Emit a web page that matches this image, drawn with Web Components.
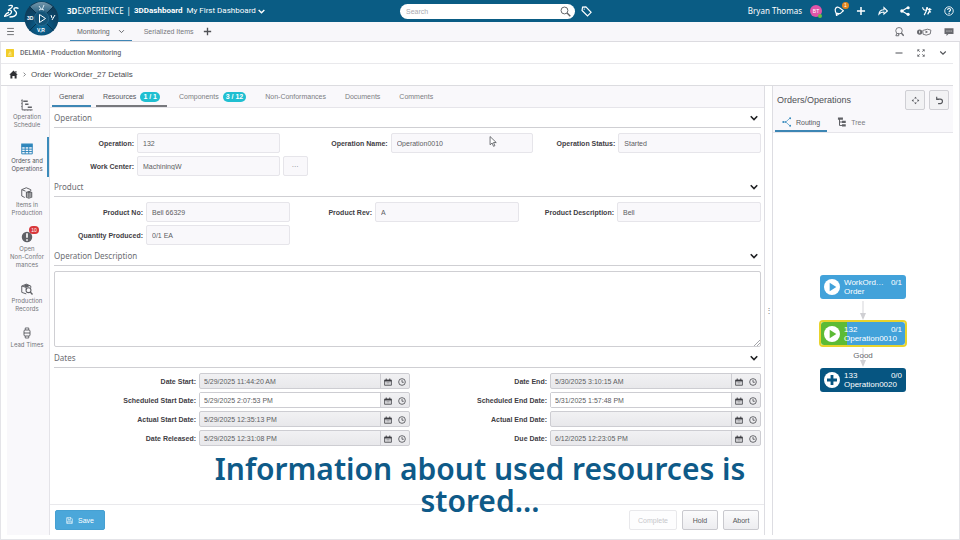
<!DOCTYPE html>
<html lang="en">
<head>
<meta charset="utf-8">
<title>DELMIA - Production Monitoring</title>
<style>
  html, body {
    margin: 0;
    height: 100%;
  }

  body {
    font: 7px/9px "Liberation Sans", Arial, sans-serif;
    color: #4f5156;
    background: #ffffff;
    overflow: hidden;
    --brand: #0a5c84;
    --blue: #42a2da;
    --line: #dddde2;
    --soft: #f9f8fb;
    --brand-font: "Noto Sans", "Open Sans", sans-serif;
  }
</style>
</head>
<body>
<app-shell></app-shell>

<script>
// Every icon is drawn on a 16x16 grid, stroked with the current colour
const ICONS = {
  menu: '<path d="M2 2.500h12M2 8h12M2 13.500h12"/>',
  plus: '<path d="M8 1.500v13M1.500 8h13" stroke-width="2.400"/>',
  chevron: '<path d="M2.500 5l5.500 5.500L13.500 5" stroke-width="2.200"/>',
  chevronBold: '<path d="M1.500 4.500L8 11l6.500-6.500" stroke-width="3.200"/>',
  right: '<path d="M5 2L11 8 5 14" stroke-width="2.200"/>',
  search: '<circle cx="6.500" cy="6.500" r="5"/><path d="M10.300 10.300L15 15" stroke-width="2"/>',
  tag: '<path d="M1.500 6.500l.8-4.800 4.800-.4 7.600 7.900-5.200 5.300z" stroke-width="1.700"/><circle cx="4.700" cy="4.500" r="1" fill="currentColor" stroke="none"/>',
  bell: '<path d="M3.500 11.500C1 7 1.500 3 5 1.800c2.500-.7 4 1 6 2.700 2 1.500 3.500 2 4 3-1.500 1-2.500 2.500-4.500 4-2 1.300-4.500.8-7 0zM3.500 12l.5 3 3.500-2" stroke-width="1.900"/>',
  share: '<path d="M1.500 13c.5-5 3.500-7 8-7V2.500L15 8l-5.500 5v-3.500C6 9.500 4 10 1.500 13z" stroke-width="1.700"/>',
  network: '<path d="M3 8l9.500-5.500M3 8l9.500 5.500" stroke-width="2"/><circle cx="3" cy="8" r="2.700" fill="currentColor" stroke="none"/><circle cx="13" cy="2.700" r="2.500" fill="currentColor" stroke="none"/><circle cx="13" cy="13.300" r="2.500" fill="currentColor" stroke="none"/>',
  tools: '<path d="M1 2c.5 3.500 2 5 5 4.500M8 1.500c0 4.500-2 9-4.500 13M9 13.500c2.500-3 3.500-7 3.500-10.500M8.500 2.500c.5 4 4 4.500 6.500 2.500M10.500 9.500h4" stroke-width="2"/>',
  help: '<circle cx="8" cy="8" r="6.800"/><path d="M5.700 6.200c.2-3.200 5-2.900 4.800 0C10.400 8 8.100 8 8.100 9.800M8.100 11.300v1.500" stroke-width="1.800"/>',
  searchUser: '<circle cx="8" cy="6" r="5.200"/><path d="M11.700 9.700l3.800 4.300" stroke-width="2.200"/><path d="M4.500 10L3 14h4.500v-4.500" stroke-width="1.500"/>',
  play3d: '<circle cx="4.500" cy="8" r="4.200" fill="currentColor" stroke="none"/><path d="M4.500 6v4" stroke="#fff" stroke-width="1.300"/><path d="M9.500 5.500L17 3.500l5.500 1.500-1 6-6.500 2-5-1.500z"/><path d="M14 5.500l4 2.500-4 2z" fill="currentColor" stroke="none"/>',
  chat: '<path d="M.8 2h14.400v9H7l-3 3.500V11H.8z" fill="currentColor" stroke="none"/><path d="M4 6.500h1.500M7.300 6.500h1.500M10.600 6.500h1.500" stroke="#fff"/>',
  minus: '<path d="M1 8h14" stroke-width="2"/>',
  expand: '<path d="M1.500 5V1.500H5M1.500 1.500l4 4M11 1.500h3.500V5M14.500 1.500l-4 4M1.500 11v3.500H5M1.500 14.500l4-4M11 14.500h3.500V11M14.500 14.500l-4-4" stroke-width="1.500"/>',
  home: '<path d="M8 .8l7.500 7.500h-2V15H10v-4.500H6V15H2.500V8.300h-2z" fill="currentColor" stroke="none"/><path d="M12.300 1.800v3" stroke-width="1.800"/>',
  app: '<rect width="16" height="16" rx="1" fill="#f2cd2a" stroke="none"/><path d="M4 12h7.500M8 4.500v4M5 9.500l6-1.500" stroke="#fff3b8" stroke-width="1.500"/>',
  schedule: '<path d="M1.500 .5v14h14" stroke-width="1.300"/><path d="M3 3h6M5.500 7h4.500M9 11h5.500" stroke-width="2.200"/><path d="M1.500 2H.3M1.500 6H.3M1.500 10H.3M5 14.500v1.200M9 14.500v1.200M13 14.500v1.200" stroke-width="1"/>',
  table: '<path d="M1 1.500h14v3H1z" fill="currentColor"/><path d="M1 5h14v9.500H1zM5.600 5v9.500M10.300 5v9.500M1 8.200h14M1 11.400h14" stroke-width="1.300"/>',
  items: '<path d="M1 3.500l6-2.500 6 2.500v2M1 3.500v8.500l4 2M1 3.500l5 2" stroke-width="1.300"/><path d="M6.500 6.500l4.500-1.500 4 2V14l-4.500 1.500L6.500 14z" fill="currentColor" stroke="none"/><path d="M8.500 7.500v6.500M10.800 8v7M13 7.500V14" stroke="#fff" stroke-width=".7"/>',
  alert: '<circle cx="8" cy="8" r="7" fill="currentColor" stroke="none"/><path d="M8 3v6M8 11v2" stroke="#fff" stroke-width="2.200"/>',
  records: '<path d="M1 4l6-2.500L13 4v2.500M1 4v8.500l6 2M1 4l6 2v3" stroke-width="1.300"/><path d="M7 1.500l5.500 2.200L7.500 6 3 4z" fill="currentColor" stroke="none"/><circle cx="10" cy="9.500" r="3.300"/><path d="M12.300 12l3 3.300" stroke-width="1.800"/>',
  lead: '<path d="M5.700 4V1.300h4.600V4M5.700 12v2.700h4.600V12" stroke-width="1.200"/><rect x="4" y="4" width="8" height="8" rx="1.500" stroke-width="1.300"/><path d="M4 8h8" stroke-width="1.300"/>',
  routing: '<path d="M3 8h3l6-5.500M6 8l6 5.500" stroke-width="1"/><circle cx="2" cy="8" r="1.500" fill="currentColor" stroke="none"/><circle cx="5.500" cy="8" r="1.300" fill="currentColor" stroke="none"/><circle cx="13" cy="2" r="1.500" fill="currentColor" stroke="none"/><circle cx="13" cy="14" r="1.500" fill="currentColor" stroke="none"/>',
  tree: '<path d="M4 2.500v11h4M4 8h4" stroke-width="1.600"/><path d="M8 7.800h6M8 13.300h6M1.500 2.500h8" stroke-width="3.400"/>',
  center: '<path d="M5.500 4.500L8 1.200l2.500 3.300zM5.500 11.500L8 14.800l2.500-3.300zM4.500 5.500L1.200 8l3.300 2.500zM11.500 5.500L14.800 8l-3.300 2.500z" fill="currentColor" stroke="none"/>',
  undo: '<path d="M3 5.500h6.500c5 0 5 8 0 8H5.500M3 1.500v4.500h4" stroke-width="2"/>',
  calendar: '<path d="M1.200 4.500h13.600V14.500H1.200z" stroke-width="1.600"/><path d="M1 3.500h14v3.500H1z" fill="currentColor" stroke="none"/><path d="M4.500 1v4M11.500 1v4" stroke-width="1.800"/><path d="M3.500 9h9.500M3.500 11.800h9.500" stroke-width="1" stroke-dasharray="1.500 1"/>',
  clock: '<circle cx="8" cy="8" r="6.700" stroke-width="1.500"/><path d="M8 4v4.500h3.500" stroke-width="1.500"/>',
  save: '<path d="M1.500 1.500h10l3 3v10h-13zM4.500 1.500v4h6v-4M4 14.500V9h8v5.500M6 11.500h4" stroke-width="1.400"/>',
  start: '<circle cx="8" cy="8" r="8" fill="#fff" stroke="none"/><path d="M5.700 3.700L12.300 8l-6.600 4.300z" fill="currentColor" stroke="none"/>',
  add: '<circle cx="8" cy="8" r="8" fill="#fff" stroke="none"/><path d="M8 3v10M3 8h10" stroke-width="2.800"/>',
  pointer: '<path d="M3 .8v12l3-2.600 2 4.800 2-.9-2-4.600h4z" fill="#fff" stroke-width="1.200"/>'
};

const define = (name, html, setup) => {
  const template = document.createElement('template');
  template.innerHTML = html;

  customElements.define(name, class extends HTMLElement {
    constructor() {
      super();
      this.attachShadow({ mode: 'open' });
      this.shadowRoot.appendChild(template.content.cloneNode(true));
    }

    connectedCallback() {
      if (setup) setup(this, selector => this.shadowRoot.querySelector(selector));
    }
  });
};

define('ui-icon', `
  <style>
    :host { display: inline-block; flex: none; width: 10px; height: 10px; }
    svg { display: block; width: 100%; height: 100%; fill: none; stroke: currentColor; stroke-width: 1.400; }
  </style>
  <svg viewBox="0 0 16 16" aria-hidden="true"></svg>
`, (host, $) => {
  const name = host.getAttribute('name');
  $('svg').innerHTML = ICONS[name];
  if (name === 'play3d') $('svg').setAttribute('viewBox', '0 0 23 16');
});

define('icon-button', `
  <style>
    :host { display: inline-flex; }
    button { display: flex; padding: 0; border: 0; background: none; color: inherit; cursor: pointer; }
    ui-icon { width: var(--icon-width, var(--icon, 10px)); height: var(--icon, 10px); }
  </style>
  <button type="button"><ui-icon></ui-icon></button>
`, (host, $) => {
  $('button').setAttribute('aria-label', host.getAttribute('label'));
  const icon = document.createElement('ui-icon');
  icon.setAttribute('name', host.getAttribute('icon'));
  $('ui-icon').replaceWith(icon);
});

define('ui-button', `
  <style>
    :host { display: inline-flex; }
    button {
      display: flex; align-items: center; justify-content: center; gap: 5px;
      box-sizing: border-box; min-width: var(--button-width, 36px); height: 20px; padding: 0 8px;
      border: 1px solid #c9c9ce; border-radius: 2px;
      background: linear-gradient(#fbfbfc, #ededf0);
      font: inherit; color: #55575c; cursor: pointer;
    }
    :host([primary]) button { min-width: 50px; border-color: #46a0d2; background: #4ba7da; color: #ffffff; }
    :host([plain]) button { min-width: 25px; padding: 0; border-color: #e6e5ea; background: var(--soft); color: #77787d; }
    :host([square]) button { min-width: 20px; padding: 0; border-color: #cfcfd4; background: #f2f2f4; }
    button:disabled { border-color: #e8e8eb; background: #fdfdfe; color: #c6c7cb; }
  </style>
  <button type="button"><slot></slot></button>
`, (host, $) => {
  $('button').disabled = host.hasAttribute('disabled');
  if (host.hasAttribute('label')) $('button').setAttribute('aria-label', host.getAttribute('label'));
});

define('nav-compass', `
  <style>
    :host { position: absolute; z-index: 2; top: 1px; left: 24px; width: 35px; height: 35px; }
    svg { display: block; }
    text { font: bold 5px "Liberation Sans", sans-serif; fill: #ffffff; }
  </style>
  <svg width="35" height="35" viewBox="0 0 35 35" role="img" aria-label="Compass">
    <defs>
      <radialGradient id="ball" cx=".5" cy=".75" r=".8">
        <stop offset="0" stop-color="#0d6c9c"/><stop offset=".45" stop-color="#0a4a70"/><stop offset="1" stop-color="#12344c"/>
      </radialGradient>
      <linearGradient id="shine" x2="0" y2="1"><stop stop-color="#8fb0c2"/><stop offset="1" stop-color="#2f6888"/></linearGradient>
    </defs>
    <circle cx="17.500" cy="17.500" r="17" fill="url(#ball)"/>
    <path d="M6 6a16 16 0 0 1 23 0l-6 6a8 8 0 0 0-11 0z" fill="url(#shine)" opacity=".8"/>
    <path d="M5.500 5.500l7 7M29.500 5.500l-7 7M5.500 29.500l7-7M29.500 29.500l-7-7" stroke="#07324c" stroke-width="1"/>
    <circle cx="17.500" cy="17.500" r="7.200" fill="#145478" stroke="#2c6c8f" stroke-width=".8"/>
    <path d="M15.500 13.500l6 4-6 4z" fill="none" stroke="#fff" stroke-width="1"/>
    <path d="M15 5l2 3-2 1M20 4l-2 5M17 8l3 1" stroke="#d5e6ef" fill="none"/>
    <text x="3" y="19">3D</text><text x="13" y="31">V,R</text>
    <path d="M27 14l1 3M31 14l-3 5" stroke="#fff" fill="none"/>
  </svg>
`);

define('top-bar', `
  <style>
    :host { display: block; position: relative; color: #ffffff; font: 8px/12px var(--brand-font); }
    header { display: grid; grid-template-columns: 400fr 175px 385fr; align-items: center; height: 22px; background: var(--brand); }
    .left, .right, .middle { display: flex; align-items: center; }
    .logo { width: 15px; height: 15px; margin: 0 48px 0 4px; }
    .brand { display: flex; gap: 3px; white-space: nowrap; }
    .left icon-button { --icon: 7px; margin-left: 2px; }
    .brand > b, .dash { font-family: Roboto, sans-serif; }
    .dash { margin-left: 1px; }
    form { position: relative; flex: 1; display: flex; margin: 0; }
    input { box-sizing: border-box; width: 100%; height: 15px; padding: 0 20px 0 6px; border: 0; border-radius: 8px; background: #ffffff; font: 7px "Liberation Sans", sans-serif; color: #555; outline: none; }
    input::placeholder { color: #a9aaaf; }
    form icon-button { position: absolute; right: 4px; top: 2px; --icon: 11px; color: #606266; }
    .right { justify-content: space-between; padding-right: 6px; }
    .tools { display: flex; align-items: center; gap: 12px; }
    .tag { margin-left: 6px; --icon: 11px; }
    .user { position: relative; display: grid; place-items: center; width: 12px; height: 12px; margin-left: -4px; border-radius: 50%; background: #e254a8; font: 5px "Liberation Sans", sans-serif; }
    .user::after { content: ""; position: absolute; right: 0; bottom: -1px; width: 4px; height: 4px; border-radius: 50%; background: #68bd45; }
    .notes { position: relative; display: flex; }
    .notes b { position: absolute; top: -4px; right: -5px; width: 7px; height: 7px; border-radius: 50%; background: #e3861e; font: 5px/7px "Liberation Sans", sans-serif; text-align: center; }
  </style>
  <header>
    <div class="left">
      <svg class="logo" viewBox="0 0 30 30" fill="none" stroke="#fff" stroke-width="2.600" role="img" aria-label="3DS">
        <path d="M9 3.500c7-2 10 0 6 4l-7 5c8-1 9 3 4 8-3 2-7 4-11 4 2-4 5-7 9-8"/>
        <path d="M29 9c-5-3-10-1-9 2s6 4 5 8c-1 5-7 7-14 7"/>
      </svg>
      <div class="brand"><span><b>3D</b>EXPERIENCE</span><span>|</span><b>3DDashboard</b><span class="dash">My First Dashboard</span></div>
      <icon-button icon="chevronBold" label="Choose dashboard"></icon-button>
    </div>
    <div class="middle">
      <form role="search">
        <input type="search" placeholder="Search" aria-label="Search">
        <icon-button icon="search" label="Run search"></icon-button>
      </form>
    </div>
    <div class="right">
      <icon-button class="tag" icon="tag" label="Tags"></icon-button>
      <div class="tools">
        <span>Bryan Thomas</span>
        <span class="user">BT</span>
        <span class="notes"><icon-button icon="bell" label="Notifications"></icon-button><b>1</b></span>
        <icon-button icon="plus" label="Add"></icon-button>
        <icon-button icon="share" label="Share"></icon-button>
        <icon-button icon="network" label="Communities"></icon-button>
        <icon-button icon="tools" label="Tools"></icon-button>
        <icon-button icon="help" label="Help"></icon-button>
      </div>
    </div>
  </header>
  <nav-compass></nav-compass>
`);

define('dashboard-tabs', `
  <style>
    :host { display: block; }
    nav { display: flex; align-items: stretch; box-sizing: border-box; height: 20px; padding: 0 6px; border-bottom: 1px solid #dcdbe0; background: #f8f7fa; }
    nav > * { align-items: center; }
    a { display: flex; align-items: center; gap: 8px; color: #77787d; text-decoration: none; }
    a.active { margin-left: 55px; padding: 0 7px; border-bottom: 1px solid #3f86b5; color: #606267; }
    a.other { margin: 0 10px 0 12px; }
    ui-icon { width: 7px; height: 7px; }
    .menu { --icon: 9px; }
    .add { --icon: 9px; }
    .tools { display: flex; gap: 12px; margin-left: auto; color: #68696e; }
    .wide { --icon-width: 16px; }
  </style>
  <nav>
    <icon-button class="menu" icon="menu" label="Menu"></icon-button>
    <a class="active" href="#monitoring">Monitoring <ui-icon name="chevron"></ui-icon></a>
    <a class="other" href="#serialized">Serialized Items</a>
    <icon-button class="add" icon="plus" label="Add tab"></icon-button>
    <div class="tools">
      <icon-button icon="searchUser" label="Find"></icon-button>
      <icon-button class="wide" icon="play3d" label="Presentation"></icon-button>
      <icon-button icon="chat" label="Messages"></icon-button>
    </div>
  </nav>
`);

define('widget-header', `
  <style>
    :host { display: block; margin-right: 6px; }
    div { display: flex; align-items: center; box-sizing: border-box; height: 22px; border-bottom: 1px solid #e9e9ec; }
    .title { gap: 6px; padding: 0 6px 0 5px; }
    h1, h2 { margin: 0; font: 500 7px/10px Roboto, sans-serif; color: #696a6f; }
    .title ui-icon { width: 8px; height: 8px; }
    .tools { height: auto; border: 0; gap: 14px; margin-left: auto; --icon: 8px; }
    .path { gap: 4px; padding-left: 8px; border-color: #dcdce0; }
    .path icon-button { --icon: 9px; color: #2e2f33; }
    .path ui-icon { width: 5px; height: 5px; }
    h2 { font: 8px/10px "Liberation Sans", sans-serif; color: #4b4d52; }
  </style>
  <div class="title">
    <ui-icon name="app"></ui-icon>
    <h1>DELMIA - Production Monitoring</h1>
    <div class="tools">
      <icon-button icon="minus" label="Minimize"></icon-button>
      <icon-button icon="expand" label="Maximize"></icon-button>
      <icon-button icon="chevron" label="More"></icon-button>
    </div>
  </div>
  <div class="path">
    <icon-button icon="home" label="Home"></icon-button>
    <ui-icon name="right"></ui-icon>
    <h2>Order WorkOrder_27 Details</h2>
  </div>
`);

define('side-item', `
  <style>
    :host { display: block; }
    a { display: flex; flex-direction: column; align-items: center; gap: 2px; padding: 6px 0 4px; border-right: 2px solid transparent; font: 6px/8px Inter, sans-serif; color: #74757a; text-align: center; text-decoration: none; }
    :host([active]) a { border-color: #3b8bbb; color: #55575c; }
    :host([active]) .icon { color: #2f86bb; }
    .icon { position: relative; display: flex; color: #606166; }
    ui-icon { width: 12px; height: 12px; }
    b { position: absolute; left: 8px; top: -5px; min-width: 10px; height: 8px; border-radius: 4px; background: #d8373b; color: #ffffff; font: 5px/8px "Liberation Sans", sans-serif; }
  </style>
  <a href="#"><span class="icon"></span><span><slot></slot></span></a>
`, (host, $) => {
  $('.icon').innerHTML = `<ui-icon name="${host.getAttribute('icon')}"></ui-icon>`
    + (host.hasAttribute('count') ? `<b>${host.getAttribute('count')}</b>` : '');
});

define('side-nav', `
  <style>
    :host { display: block; border-right: 1px solid #e4e3e8; background: var(--soft); }
    nav { display: flex; flex-direction: column; gap: 4px; padding-top: 7px; }
  </style>
  <nav>
    <side-item icon="schedule">Operation<br>Schedule</side-item>
    <side-item icon="table" active>Orders and<br>Operations</side-item>
    <side-item icon="items">Items in<br>Production</side-item>
    <side-item icon="alert" count="10">Open<br>Non-Confor<br>mances</side-item>
    <side-item icon="records">Production<br>Records</side-item>
    <side-item icon="lead">Lead Times</side-item>
  </nav>
`);

define('tab-item', `
  <style>
    :host { display: flex; }
    a { display: flex; align-items: center; gap: 4px; padding: var(--tab-top, 2px) 7px 0; border-bottom: 2px solid transparent; color: #7c7d82; text-decoration: none; }
    :host([active]) a { border-color: #3d86b4; color: #55575c; }
    :host([visited]) a { border-color: #77787d; color: #55575c; }
    b { padding: 0 3px; border-radius: 5px; background: #20bfd1; color: #ffffff; line-height: 10px; white-space: nowrap; }
  </style>
  <a href="#"><slot></slot></a>
`, (host, $) => {
  if (!host.hasAttribute('count')) return;
  const count = document.createElement('b');
  count.textContent = host.getAttribute('count');
  $('a').appendChild(count);
});

define('form-section', `
  <style>
    :host { display: block; }
    header { display: flex; align-items: center; justify-content: space-between; box-sizing: border-box; height: 20px; padding-right: 3px; border-bottom: 1px solid #cfcfd3; }
    h3 { margin: 0; font: 8px/10px var(--brand-font); color: #6c6d72; }
    icon-button { --icon: 8px; color: #1f2023; }
    .body { display: grid; grid-template-columns: var(--columns, 1fr); gap: 3px; padding: 5px 0 1px; }
  </style>
  <header><h3></h3><icon-button icon="chevronBold" label="Collapse"></icon-button></header>
  <div class="body"><slot></slot></div>
`, (host, $) => {
  $('h3').textContent = host.getAttribute('heading');
});

// Label and input take part in the grid of the section they are slotted into
define('text-field', `
  <style>
    :host { display: contents; }
    label { align-self: center; text-align: right; font-weight: bold; color: #3f4045; white-space: nowrap; }
    input { box-sizing: border-box; width: 100%; min-width: 0; height: 20px; padding: 0 5px; border: 1px solid #e6e5ea; border-radius: 2px; background: var(--soft); font: inherit; color: #5c5d62; outline: none; }
  </style>
  <label for="field"></label>
  <input id="field" type="text" readonly>
`, (host, $) => {
  $('label').textContent = host.getAttribute('label') + ':';
  $('input').value = host.getAttribute('value');
});

define('date-field', `
  <style>
    :host { display: contents; }
    label { align-self: center; text-align: right; font-weight: bold; color: #3f4045; white-space: nowrap; }
    .box { display: flex; box-sizing: border-box; height: 16px; border: 1px solid #cdcdd2; border-radius: 2px; background: linear-gradient(#f1f1f3, #e8e8eb); }
    input { flex: 1; min-width: 0; padding: 0 4px; border: 0; border-right: 1px solid #cdcdd2; background: transparent; font: inherit; color: #5c5d62; outline: none; }
    :host([editable]) input { background: #ffffff; }
    .tools { display: flex; align-items: center; gap: 6px; padding: 1px 3px 0; color: #3e3f44; --icon: 8px; }
  </style>
  <label for="field"></label>
  <div class="box">
    <input id="field" type="text">
    <div class="tools">
      <icon-button icon="calendar" label="Pick date"></icon-button>
      <icon-button icon="clock" label="Pick time"></icon-button>
    </div>
  </div>
`, (host, $) => {
  $('label').textContent = host.getAttribute('label') + ':';
  $('input').value = host.getAttribute('value');
  $('input').readOnly = !host.hasAttribute('editable');
});

define('details-form', `
  <style>
    :host { display: flex; flex-direction: column; min-width: 0; border-right: 1px solid var(--line); }
    nav { display: flex; gap: 5px; box-sizing: border-box; height: 22px; padding-left: 2px; border-bottom: 1px solid #e6e5ea; background: var(--soft); }
    .body { flex: 1; padding: 0 3px 0 4px; }
    .operation { --columns: 80px 1fr 105px 1fr 79px 1fr; }
    .product { --columns: 89px 1fr 79px 1fr 92px 1fr; }
    .dates { --columns: 142px 1fr 134px 1fr; }
    textarea { display: block; box-sizing: border-box; width: 100%; height: 76px; border: 1px solid #cfcfd3; border-radius: 2px; background: #ffffff; font: inherit; outline: none; resize: vertical; }
    textarea::-webkit-resizer { background: linear-gradient(135deg, transparent 78%, #a5a6ab 78% 82%, transparent 82% 88%, #a5a6ab 88% 92%, transparent 92%); }
    footer { display: flex; align-items: center; gap: 5px; padding: 5px; border-top: 1px solid #e9e9ec; }
    footer ui-icon { width: 7px; height: 7px; }
    .first { margin-right: auto; }
    .wide { --button-width: 45px; }
  </style>
  <nav>
    <tab-item active>General</tab-item>
    <tab-item visited count="1 / 1">Resources</tab-item>
    <tab-item count="3 / 12">Components</tab-item>
    <tab-item>Non-Conformances</tab-item>
    <tab-item>Documents</tab-item>
    <tab-item>Comments</tab-item>
  </nav>
  <div class="body">
    <form-section class="operation" heading="Operation">
      <text-field label="Operation" value="132"></text-field>
      <text-field label="Operation Name" value="Operation0010"></text-field>
      <text-field label="Operation Status" value="Started"></text-field>
      <text-field label="Work Center" value="MachiningW"></text-field>
      <ui-button plain label="Choose work center">···</ui-button>
    </form-section>
    <form-section class="product" heading="Product">
      <text-field label="Product No" value="Bell 66329"></text-field>
      <text-field label="Product Rev" value="A"></text-field>
      <text-field label="Product Description" value="Bell"></text-field>
      <text-field label="Quantity Produced" value="0/1 EA"></text-field>
    </form-section>
    <form-section heading="Operation Description">
      <textarea aria-label="Operation Description"></textarea>
    </form-section>
    <form-section class="dates" heading="Dates">
      <date-field label="Date Start" value="5/29/2025 11:44:20 AM"></date-field>
      <date-field label="Date End" value="5/30/2025 3:10:15 AM"></date-field>
      <date-field editable label="Scheduled Start Date" value="5/29/2025 2:07:53 PM"></date-field>
      <date-field editable label="Scheduled End Date" value="5/31/2025 1:57:48 PM"></date-field>
      <date-field label="Actual Start Date" value="5/29/2025 12:35:13 PM"></date-field>
      <date-field label="Actual End Date" value=""></date-field>
      <date-field label="Date Released" value="5/29/2025 12:31:08 PM"></date-field>
      <date-field label="Due Date" value="6/12/2025 12:23:05 PM"></date-field>
    </form-section>
  </div>
  <footer>
    <ui-button class="first" primary><ui-icon name="save"></ui-icon>Save</ui-button>
    <ui-button class="wide" disabled>Complete</ui-button>
    <ui-button>Hold</ui-button>
    <ui-button>Abort</ui-button>
  </footer>
`);

define('route-node', `
  <style>
    :host { display: block; box-sizing: border-box; width: 88px; border: 1px solid transparent; border-radius: 4px; }
    div { display: flex; align-items: center; gap: 4px; height: 24px; padding: 0 4px; border-radius: 3px; background: var(--node, var(--blue)); color: #ffffff; font-size: 8px; line-height: 9px; }
    :host([active]) { border: 2px solid #e8d32c; }
    :host([active]) div { height: 23px; padding: 0 3px; background: linear-gradient(90deg, #5dbb35 26px, var(--blue) 26px); }
    ui-icon { width: 16px; height: 16px; color: var(--mark, var(--node, var(--blue))); }
    p { flex: 1; display: grid; grid-template-columns: 1fr auto; margin: 0; white-space: nowrap; }
    .second { grid-column: 1 / 3; }
  </style>
  <div><ui-icon></ui-icon><p><span class="name"></span><span class="count"></span><span class="second"></span></p></div>
`, (host, $) => {
  for (const part of ['name', 'count', 'second']) $('.' + part).textContent = host.getAttribute(part);
  const icon = document.createElement('ui-icon');
  icon.setAttribute('name', host.getAttribute('icon'));
  $('ui-icon').replaceWith(icon);
});

define('route-arrow', `
  <style>
    :host { position: relative; display: flex; justify-content: center; }
    svg { display: block; width: 8px; height: 20px; }
    span { position: absolute; top: 4px; font-size: 8px; line-height: 10px; color: #66676c; }
  </style>
  <svg viewBox="0 0 8 20"><path d="M4 1v13" stroke="#d5d5d9"/><path d="M1 13h6l-3 7z" fill="#cfcfd3"/></svg>
  <span><slot></slot></span>
`);

define('orders-panel', `
  <style>
    :host { display: flex; flex-direction: column; border-left: 1px solid var(--line); }
    header { display: flex; align-items: center; gap: 4px; height: 28px; padding: 0 4px; background: var(--soft); }
    h2 { flex: 1; margin: 0; font-size: 9px; font-weight: normal; line-height: 11px; color: #4f5156; }
    nav { display: flex; gap: 3px; box-sizing: border-box; height: 19px; padding-left: 2px; border-bottom: 1px solid #e6e5ea; background: var(--soft); --tab-top: 0; }
    nav ui-icon { color: #2f86bb; }
    .tree ui-icon { color: #606166; }
    header ui-icon { width: 9px; height: 9px; color: #55575c; }
    .canvas { flex: 1; display: flex; flex-direction: column; align-items: center; padding-top: 141px; }
    .todo { --node: #065581; }
    .run { --mark: #5dbb35; }
  </style>
  <header>
    <h2>Orders/Operations</h2>
    <ui-button square label="Center"><ui-icon name="center"></ui-icon></ui-button>
    <ui-button square label="Reset"><ui-icon name="undo"></ui-icon></ui-button>
  </header>
  <nav>
    <tab-item active><ui-icon name="routing"></ui-icon>Routing</tab-item>
    <tab-item class="tree"><ui-icon name="tree"></ui-icon>Tree</tab-item>
  </nav>
  <div class="canvas">
    <route-node icon="start" name="WorkOrd…" count="0/1" second="Order"></route-node>
    <route-arrow></route-arrow>
    <route-node class="run" active icon="start" name="132" count="0/1" second="Operation0010"></route-node>
    <route-arrow>Good</route-arrow>
    <route-node class="todo" icon="add" name="133" count="0/0" second="Operation0020"></route-node>
  </div>
`);

define('video-caption', `
  <style>
    :host { position: absolute; z-index: 3; left: 0; right: 0; bottom: 23px; display: flex; justify-content: center; pointer-events: none; }
    p { margin: 0; font: 600 30px/32px var(--brand-font); color: #0e5a88; text-align: center; }
  </style>
  <p><slot></slot></p>
`);

define('app-shell', `
  <style>
    :host { position: relative; display: flex; flex-direction: column; height: 100vh; }
    main { flex: 1; display: flex; flex-direction: column; box-sizing: border-box; min-height: 0; border: 1px solid #e4e4e8; border-top: 0; }
    .content { flex: 1; display: grid; grid-template-columns: 43px minmax(0, 1fr) 7px 181px; padding: 0 6px 4px; min-height: 0; }
    .grip { align-self: center; text-align: center; font-size: 8px; color: #77787d; }
    .pointer { position: absolute; z-index: 4; left: 488px; top: 136px; width: 11px; height: 11px; color: #55575c; }
  </style>
  <top-bar></top-bar>
  <dashboard-tabs></dashboard-tabs>
  <main>
    <widget-header></widget-header>
    <div class="content">
      <side-nav></side-nav>
      <details-form></details-form>
      <span class="grip">⋮</span>
      <orders-panel></orders-panel>
    </div>
  </main>
  <video-caption>Information about used resources is<br>stored...</video-caption>
  <ui-icon class="pointer" name="pointer"></ui-icon>
`);
</script>
</body>
</html>
